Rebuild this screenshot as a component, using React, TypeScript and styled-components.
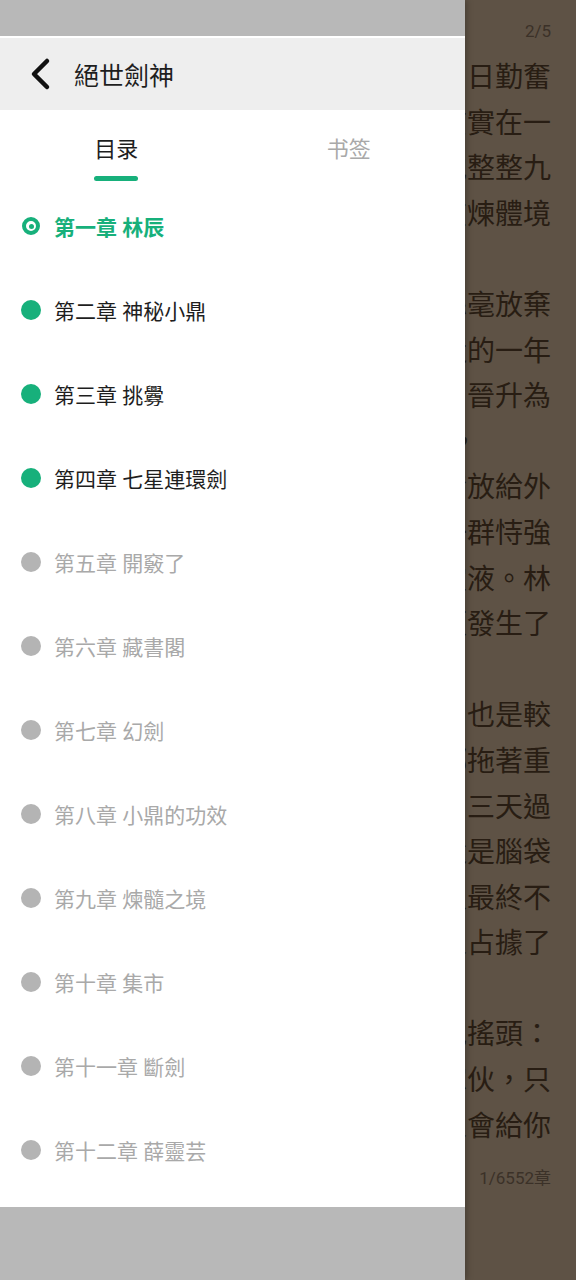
import React from "react";
import styled, { createGlobalStyle } from "styled-components";

const GREEN = "#17b07b";

const Global = createGlobalStyle`
  html, body { margin: 0; padding: 0; }
  body {
    width: 576px;
    height: 1280px;
    overflow: hidden;
    font-family: Roboto, "Noto Sans CJK SC", "Noto Sans", sans-serif;
  }
`;

const Page = styled.div`
  position: relative;
  width: 576px;
  height: 1280px;
  overflow: hidden;
  background: #5e5245;
`;

const Reader = styled.div`
  display: flex;
  flex-direction: column;
  align-items: flex-end;
  padding: 20px 25px 0 0;
  font-family: Roboto, "Noto Sans CJK TC", sans-serif;
  color: #281d13;
`;

const PageNo = styled.div`
  font-size: 17px;
  line-height: 22px;
  color: #3b3128;
`;

const TextBlock = styled.div`
  margin-top: 13px;
  display: flex;
  flex-direction: column;
  align-items: flex-end;
  font-size: 28px;
  line-height: 45.6px;
`;

const Line = styled.div<{ $trail?: number }>`
  white-space: nowrap;
  height: 45.6px;
  padding-right: ${(p) => (p.$trail ?? 0) * 28}px;
`;

const Footer = styled.div`
  margin-top: 18px;
  font-size: 17px;
  line-height: 22px;
  color: #3b3128;
`;

const Drawer = styled.div`
  position: absolute;
  left: 0;
  top: 0;
  width: 465px;
  height: 1280px;
  display: flex;
  flex-direction: column;
  background: #b8b8b8;
  box-shadow: 2px 0 6px rgba(0, 0, 0, 0.25);
`;

const StatusGap = styled.div`
  height: 36px;
  flex: none;
`;

const BottomGap = styled.div`
  height: 73px;
  flex: none;
`;

const Sheet = styled.div`
  flex: 1;
  background: #ffffff;
  padding-top: 2px;
  display: flex;
  flex-direction: column;
`;

const Header = styled.div`
  height: 72px;
  background: #eeeeee;
  display: flex;
  align-items: center;
  padding-left: 28px;
  gap: 22px;
`;

const Title = styled.div`
  font-size: 25px;
  color: #1e1e1e;
  font-family: "Noto Sans CJK TC", sans-serif;
`;

const Tabs = styled.div`
  height: 76px;
  display: grid;
  grid-template-columns: 1fr 1fr;
`;

const Tab = styled.div<{ $active?: boolean }>`
  display: flex;
  flex-direction: column;
  align-items: center;
  padding-top: 26px;
  gap: 12px;
  font-size: 22px;
  line-height: 28px;
  color: ${(p) => (p.$active ? "#1e1e1e" : "#a9a9a9")};
`;

const Underline = styled.div`
  width: 44px;
  height: 5px;
  border-radius: 3px;
  background: ${GREEN};
`;

const List = styled.div`
  display: flex;
  flex-direction: column;
  margin-top: -2px;
`;

type State = "current" | "read" | "unread";

const Item = styled.div<{ $state: State }>`
  height: 84px;
  display: flex;
  align-items: center;
  padding-left: 21px;
  gap: 13px;
  font-size: 21px;
  font-weight: ${(p) => (p.$state === "current" ? 700 : 400)};
  color: ${(p) =>
    p.$state === "current" ? GREEN : p.$state === "read" ? "#1e1e1e" : "#a9a9a9"};
`;

const Marker = styled.div`
  width: 20px;
  height: 20px;
  display: flex;
  align-items: center;
  justify-content: center;
  flex: none;
`;

const Dot = styled.div<{ $read: boolean }>`
  width: 20px;
  height: 20px;
  border-radius: 50%;
  background: ${(p) => (p.$read ? GREEN : "#b4b4b4")};
`;

const Ring = styled.div`
  width: 18px;
  height: 18px;
  box-sizing: border-box;
  border-radius: 50%;
  border: 4.5px solid ${GREEN};
  display: flex;
  align-items: center;
  justify-content: center;
  &::after {
    content: "";
    width: 5px;
    height: 5px;
    border-radius: 50%;
    background: ${GREEN};
  }
`;

const chapters: { t: string; s: State }[] = [
  { t: "第一章 林辰", s: "current" },
  { t: "第二章 神秘小鼎", s: "read" },
  { t: "第三章 挑釁", s: "read" },
  { t: "第四章 七星連環劍", s: "read" },
  { t: "第五章 開竅了", s: "unread" },
  { t: "第六章 藏書閣", s: "unread" },
  { t: "第七章 幻劍", s: "unread" },
  { t: "第八章 小鼎的功效", s: "unread" },
  { t: "第九章 煉髓之境", s: "unread" },
  { t: "第十章 集市", s: "unread" },
  { t: "第十一章 斷劍", s: "unread" },
  { t: "第十二章 薛靈芸", s: "unread" },
];

const lines: { t: string; trail?: number }[] = [
  { t: "林辰自從踏入修煉以來，日日勤奮" },
  { t: "修煉，可是他的資質實在一" },
  { t: "般，三年的苦修，他整整九" },
  { t: "年都停留在煉體境" },
  { t: "一重。", trail: 8 },
  { t: "但林辰卻從來沒有絲毫放棄" },
  { t: "的念頭，終於在最近的一年" },
  { t: "裏，他接連突破，晉升為" },
  { t: "煉體境三重，", trail: 2.6 },
  { t: "林家每個月都會發放給外" },
  { t: "門弟子的丹藥，被一群恃強" },
  { t: "凌弱的人奪走了靈液。林" },
  { t: "辰不甘心，於是便發生了" },
  { t: "衝突。", trail: 8 },
  { t: "林辰的實力在外門也是較" },
  { t: "弱的，他每天都拖著重" },
  { t: "傷回到住處，過了三天過" },
  { t: "後，他只覺得還是腦袋" },
  { t: "昏沉，努力許久最終不" },
  { t: "敵，地盤也被人占據了" },
  { t: "。", trail: 8 },
  { t: "那人看著他輕蔑地搖頭：" },
  { t: "「你這個傢伙，只" },
  { t: "是廢物，沒人會給你" },
];

function Chevron() {
  return (
    <svg width="24" height="34" viewBox="0 0 24 34" fill="none">
      <polyline
        points="19,4 6,17 19,30"
        stroke="#111"
        strokeWidth="4.5"
        strokeLinecap="round"
        strokeLinejoin="round"
      />
    </svg>
  );
}

export default function App() {
  return (
    <Page>
      <Global />
      <Reader>
        <PageNo>2/5</PageNo>
        <TextBlock>
          {lines.map((l, i) => (
            <Line key={i} $trail={l.trail}>
              {l.t}
            </Line>
          ))}
        </TextBlock>
        <Footer>1/6552章</Footer>
      </Reader>
      <Drawer>
        <StatusGap />
        <Sheet>
          <Header>
            <Chevron />
            <Title>絕世劍神</Title>
          </Header>
          <Tabs>
            <Tab $active>
              目录
              <Underline />
            </Tab>
            <Tab>书签</Tab>
          </Tabs>
          <List>
            {chapters.map((c, i) => (
              <Item key={i} $state={c.s}>
                <Marker>
                  {c.s === "current" ? <Ring /> : <Dot $read={c.s === "read"} />}
                </Marker>
                {c.t}
              </Item>
            ))}
          </List>
        </Sheet>
        <BottomGap />
      </Drawer>
    </Page>
  );
}
